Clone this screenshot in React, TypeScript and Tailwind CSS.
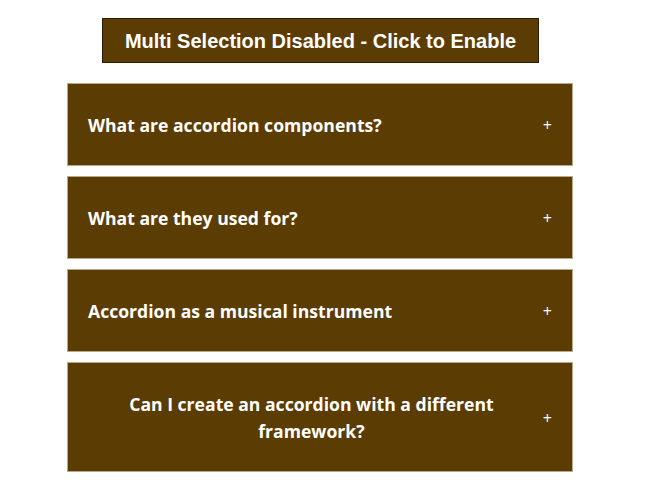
import React from "react";

const items = [
  "What are accordion components?",
  "What are they used for?",
  "Accordion as a musical instrument",
  "Can I create an accordion with a different framework?",
];

export default function App() {
  return (
    <div className="min-h-screen bg-white">
      <div className="flex pl-[102px] pt-[18px]">
        <button
          className="h-[45px] w-[437px] border border-[#2a1c00] bg-[#5b3c03] text-[20px] font-bold text-white"
          style={{ fontFamily: '"Liberation Sans", Arial, sans-serif' }}
        >
          Multi Selection Disabled - Click to Enable
        </button>
      </div>
      <div className="ml-[67px] mt-[20px] flex w-[506px] flex-col gap-[10px]">
        {items.map((t) => (
          <div
            key={t}
            className="flex items-center justify-between border border-[#b8a98a] bg-[#5b3c03] px-[20px] pt-[28px] pb-[26px] text-white"
            style={{ fontFamily: '"Open Sans", "Noto Sans", sans-serif' }}
          >
            <span className="text-center text-[17.6px] font-bold leading-[27px]">{t}</span>
            <span className="ml-[8px] text-[16px] leading-[27px]">+</span>
          </div>
        ))}
      </div>
    </div>
  );
}
